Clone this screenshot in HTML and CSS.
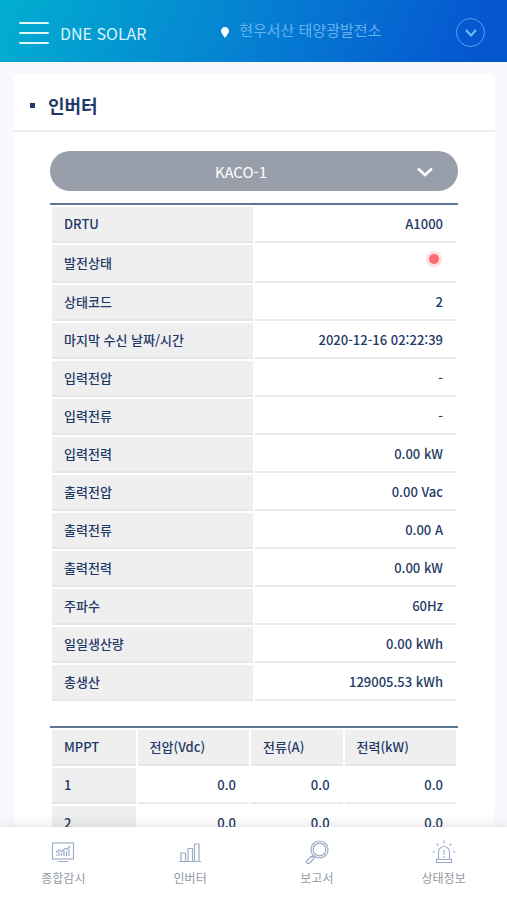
FILE: index.html
```html
<!DOCTYPE html>
<html lang="ko">
<head>
  <meta charset="UTF-8">
  <meta name="viewport" content="width=device-width, initial-scale=1.0">
  <title>DNE SOLAR - 인버터</title>
  <link rel="stylesheet" href="styles.css">
</head>
<body>
  <header class="header">
    <button class="menu-btn" type="button" aria-label="메뉴">
      <span></span><span></span><span></span>
    </button>
    <a class="logo" href="#">DNE SOLAR</a>
    <div class="plant">
      <svg class="pin" viewBox="0 0 8 11" aria-hidden="true"><path d="M4 0C1.700 0 0 1.700 0 4c0 2.700 2.600 4.400 4 7 1.400-2.600 4-4.300 4-7 0-2.300-1.700-4-4-4z" fill="#fff"/></svg>
      <span>현우서산 태양광발전소</span>
    </div>
    <button class="plant-btn" type="button" aria-label="발전소 선택">
      <svg viewBox="0 0 12 8" aria-hidden="true"><path d="M1 1l5 5.500L11 1" fill="none" stroke="currentColor" stroke-width="2"/></svg>
    </button>
  </header>

  <main class="main">
    <section class="card">
      <h1 class="title">인버터</h1>
      <div class="content">
        <div class="select-box">
          <select class="select" aria-label="인버터 선택">
            <option>KACO-1</option>
          </select>
          <svg class="select-arrow" viewBox="0 0 16 10" aria-hidden="true"><path d="M1 1.500l7 6.500 7-6.500" fill="none" stroke="#fff" stroke-width="2.400"/></svg>
        </div>

        <table class="table info">
          <tr><th scope="row">DRTU</th><td>A1000</td></tr>
          <tr class="state"><th scope="row">발전상태</th><td><span class="dot" role="img" aria-label="정지"></span></td></tr>
          <tr><th scope="row">상태코드</th><td>2</td></tr>
          <tr><th scope="row">마지막 수신 날짜/시간</th><td>2020-12-16 02:22:39</td></tr>
          <tr><th scope="row">입력전압</th><td>-</td></tr>
          <tr><th scope="row">입력전류</th><td>-</td></tr>
          <tr><th scope="row">입력전력</th><td>0.00 kW</td></tr>
          <tr><th scope="row">출력전압</th><td>0.00 Vac</td></tr>
          <tr><th scope="row">출력전류</th><td>0.00 A</td></tr>
          <tr><th scope="row">출력전력</th><td>0.00 kW</td></tr>
          <tr><th scope="row">주파수</th><td>60Hz</td></tr>
          <tr><th scope="row">일일생산량</th><td>0.00 kWh</td></tr>
          <tr><th scope="row">총생산</th><td>129005.53 kWh</td></tr>
        </table>

        <table class="table mppt">
          <thead>
            <tr><th scope="col">MPPT</th><th scope="col">전압(Vdc)</th><th scope="col">전류(A)</th><th scope="col">전력(kW)</th></tr>
          </thead>
          <tbody>
            <tr><th scope="row">1</th><td>0.0</td><td>0.0</td><td>0.0</td></tr>
            <tr><th scope="row">2</th><td>0.0</td><td>0.0</td><td>0.0</td></tr>
          </tbody>
        </table>
      </div>
    </section>
  </main>

  <nav class="tabbar">
    <a href="#">
      <svg viewBox="0 0 24 24" aria-hidden="true">
        <rect x="1.500" y="3" width="21" height="16"/>
        <path d="M7 21.500h10M5 12.500l3-2.500 3 1.500 3-3 2 .5 3.500-3M5.500 16v-1.500M8 16v-4M10.500 16v-3M13 16v-5M15.500 16v-5M18 16V9"/>
      </svg>
      <span>종합감시</span>
    </a>
    <a href="#">
      <svg viewBox="0 0 24 24" aria-hidden="true">
        <path d="M1 21.500h22M3 21.500V13h4.500v8.500M10 21.500V8.500h4.500v13M16.500 21.500V4H21v17.500"/>
      </svg>
      <span>인버터</span>
    </a>
    <a href="#">
      <svg viewBox="0 0 24 24" aria-hidden="true">
        <circle cx="14.500" cy="9.500" r="8.500"/>
        <circle cx="14.500" cy="9.500" r="6.300"/>
        <path d="M8.500 15.500l-2 2M6 16.500l-4 4a1.500 1.500 0 0 0 2.500 2.500l4-4a1.800 1.800 0 0 0-2.500-2.500z"/>
      </svg>
      <span>보고서</span>
    </a>
    <a href="#">
      <svg viewBox="0 0 24 24" aria-hidden="true">
        <path d="M6.500 19.500V12a5.500 5.500 0 0 1 11 0v7.500M4.500 19.500h15v3h-15zM12 10v4.500M12 16v1.500M12 .5V3M4.500 3.500l2 2M19.500 3.500l-2 2M.5 12H3M21 12h2.500"/>
      </svg>
      <span>상태정보</span>
    </a>
  </nav>
</body>
</html>
```

FILE: styles.css
```css
* {
  box-sizing: border-box;
}

body {
  margin: 0;
  height: 100vh;
  display: flex;
  flex-direction: column;
  font-family: "Noto Sans CJK KR", sans-serif;
  font-size: 13px;
  color: #1f3a66;
  background: #f8f9fc;
}

a {
  text-decoration: none;
}

button {
  padding: 0;
  background: none;
  border: 0;
}

/* header */
.header {
  flex: none;
  display: flex;
  align-items: center;
  height: 62px;
  padding: 3px 22px 0 19px;
  background: linear-gradient(110deg, #02aed0 0%, #0580d2 50%, #0557d0 92%);
}

.menu-btn {
  display: flex;
  flex-direction: column;
  gap: 8px;
  width: 30px;
}

.menu-btn span {
  height: 2px;
  border-radius: 1px;
  background: #dff8ff;
}

.logo {
  margin-left: 11px;
  font-size: 16px;
  color: #d9f5ff;
}

.plant {
  flex: 1;
  display: flex;
  align-items: center;
  justify-content: center;
  gap: 10px;
  padding-bottom: 6px;
  font-size: 15px;
  color: #67b2f0;
}

.pin {
  width: 8px;
  height: 11px;
  margin-top: 6px;
}

.plant-btn {
  display: flex;
  align-items: center;
  justify-content: center;
  width: 29px;
  height: 29px;
  border: 1px solid #50a2f4;
  border-radius: 50%;
  color: #72bbfa;
}

.plant-btn svg {
  width: 12px;
  height: 8px;
}

/* card */
.main {
  flex: 1;
  min-height: 0;
  overflow-y: auto;
  scrollbar-width: none;
  padding: 12px 12px 0 13px;
}

.card {
  background: #fff;
  border-radius: 6px;
}

.title {
  display: flex;
  align-items: center;
  gap: 13px;
  height: 58px;
  margin: 0;
  padding: 6px 17px 0;
  border-bottom: 2px solid #eeeff1;
  font-size: 18px;
  font-weight: 700;
}

.title::before {
  content: "";
  width: 5px;
  height: 5px;
  background: #1f3a66;
}

.content {
  padding: 19px 37px 40px;
}

.select-box {
  position: relative;
  margin-bottom: 12px;
}

.select {
  display: block;
  width: 100%;
  height: 40px;
  padding: 0 44px 0 18px;
  appearance: none;
  border: 0;
  border-radius: 20px;
  background: #989faa;
  color: #fff;
  font-family: inherit;
  font-size: 15px;
  text-align: center;
  text-align-last: center;
}

.select-arrow {
  position: absolute;
  top: 16px;
  right: 25px;
  width: 16px;
  height: 10px;
  pointer-events: none;
}

/* tables */
.table {
  width: 100%;
  table-layout: fixed;
  border-collapse: separate;
  border-spacing: 2px;
  border-top: 2px solid #5f7693;
  font-weight: 500;
}

.table th,
.table td {
  height: 36px;
  padding: 0 13px 0 12px;
  border-bottom: 2px solid #ebebeb;
  line-height: 20px;
}

.table th {
  background: #efefef;
  border-bottom-color: #e6e6e6;
  font-weight: 500;
  text-align: left;
}

.table td {
  text-align: right;
}

.info {
  margin-bottom: 23px;
}

.info .state th,
.info .state td {
  height: 38px;
}

.dot {
  display: inline-block;
  width: 10px;
  height: 10px;
  margin: 0 4px 4px 0;
  border-radius: 50%;
  background: #fb6a6e;
  box-shadow: 0 0 0 3px #ffdfe1;
}

.mppt th:nth-child(1) {
  width: 21%;
}

.mppt th:nth-child(2) {
  width: 28%;
}

.mppt th:nth-child(3) {
  width: 23%;
}

/* bottom tabs */
.tabbar {
  position: relative;
  flex: none;
  display: grid;
  grid-template-columns: repeat(4, 1fr);
  height: 73px;
  padding-top: 13px;
  background: #fff;
  box-shadow: 0 -2px 12px rgba(0, 0, 0, 0.1);
}

.tabbar a {
  display: flex;
  flex-direction: column;
  align-items: center;
  gap: 4px;
  font-size: 12px;
  line-height: 20px;
  color: #9299a3;
}

.tabbar svg {
  width: 24px;
  height: 24px;
  fill: none;
  stroke: #9eacc8;
  stroke-width: 1.2;
}
```
